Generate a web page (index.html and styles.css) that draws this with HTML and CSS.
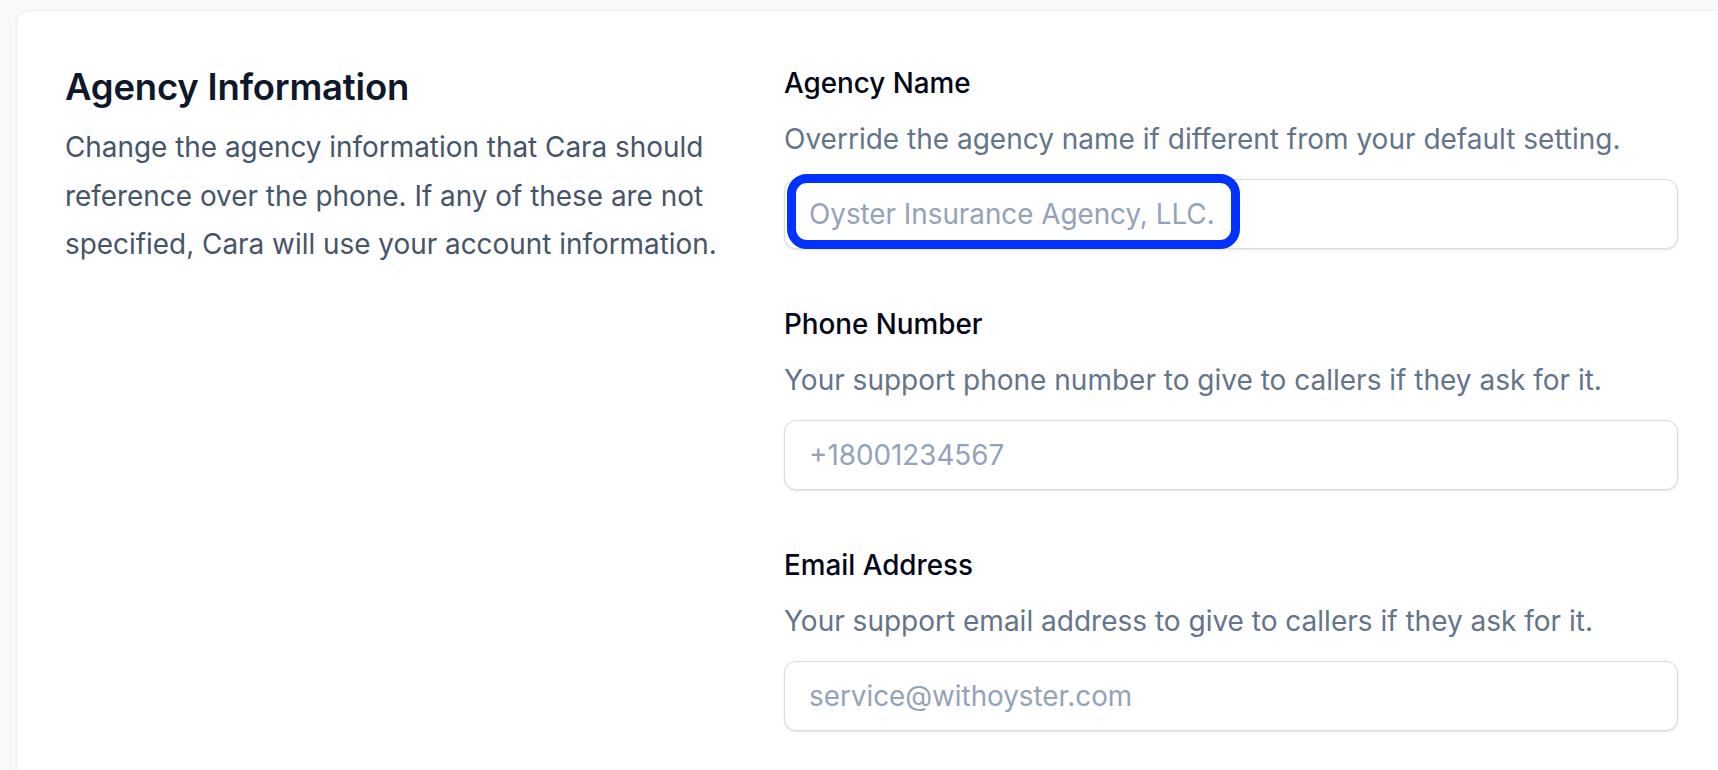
FILE: index.html
```html
<!DOCTYPE html>
<html lang="en">
<head>
<meta charset="utf-8">
<title>Agency Information</title>
<link rel="stylesheet" href="styles.css">
</head>
<body>
<main class="card">
  <section class="intro">
    <h2 class="intro-title">Agency Information</h2>
    <p class="intro-text">Change the agency information that Cara should reference over the phone. If any of these are not specified, Cara will use your account information.</p>
  </section>
  <section class="fields">
    <div class="field">
      <label class="field-label" for="agency-name">Agency Name</label>
      <p class="field-desc">Override the agency name if different from your default setting.</p>
      <div class="input-wrap">
        <input class="field-input" id="agency-name" type="text" placeholder="Oyster Insurance Agency, LLC.">
        <span class="highlight"></span>
      </div>
    </div>
    <div class="field">
      <label class="field-label" for="phone">Phone Number</label>
      <p class="field-desc">Your support phone number to give to callers if they ask for it.</p>
      <div class="input-wrap">
        <input class="field-input" id="phone" type="text" placeholder="+18001234567">
      </div>
    </div>
    <div class="field">
      <label class="field-label" for="email">Email Address</label>
      <p class="field-desc">Your support email address to give to callers if they ask for it.</p>
      <div class="input-wrap">
        <input class="field-input" id="email" type="text" placeholder="service@withoyster.com">
      </div>
    </div>
  </section>
</main>
</body>
</html>
```

FILE: styles.css
```css
html, body {
  margin: 0;
  padding: 0;
  overflow: hidden;
  background: #f8f9fb;
  font-family: Inter, "Noto Sans", "Liberation Sans", sans-serif;
}

body {
  padding: 10px 0 0 16px;
  height: 770px;
  box-sizing: border-box;
}

.card {
  box-sizing: border-box;
  margin-right: -24px;
  height: 790px;
  background: #ffffff;
  border: 1px solid #eef0f3;
  border-radius: 14px;
  box-shadow: 0 1px 3px rgba(15, 23, 42, 0.05);
  padding: 52px 63px 0 48px;
  display: grid;
  grid-template-columns: 690px 1fr;
  column-gap: 29px;
  align-items: start;
}

.intro-title {
  margin: 0;
  font-size: 36.5px;
  line-height: 48px;
  font-weight: 600;
  color: #0f172a;
  letter-spacing: -0.2px;
}

.intro-text {
  margin: 12px 0 0;
  font-size: 27.9px;
  line-height: 48.5px;
  color: #475569;
}

.fields {
  display: flex;
  flex-direction: column;
  gap: 55px;
}

.field {
  display: flex;
  flex-direction: column;
}

.field-label {
  font-size: 27.8px;
  line-height: 40px;
  font-weight: 500;
  color: #020617;
}

.field-desc {
  margin: 12px 0 0;
  font-size: 28px;
  line-height: 48px;
  color: #64748b;
}

.input-wrap {
  position: relative;
  margin-top: 16px;
}

.field-input {
  display: block;
  box-sizing: border-box;
  width: 100%;
  height: 70px;
  padding: 0 24px;
  border: 1.5px solid #d9dbe0;
  border-radius: 12px;
  background: #ffffff;
  box-shadow: 0 1px 2px rgba(15, 23, 42, 0.12);
  font-family: inherit;
  font-size: 27.8px;
  color: #0f172a;
  outline: none;
}

.field-input::placeholder {
  color: #94a3b8;
  opacity: 1;
}

.highlight {
  position: absolute;
  left: 3px;
  top: -5px;
  width: 453px;
  height: 75px;
  box-sizing: border-box;
  border: 9px solid #0033ff;
  border-radius: 20px;
  pointer-events: none;
}
```
